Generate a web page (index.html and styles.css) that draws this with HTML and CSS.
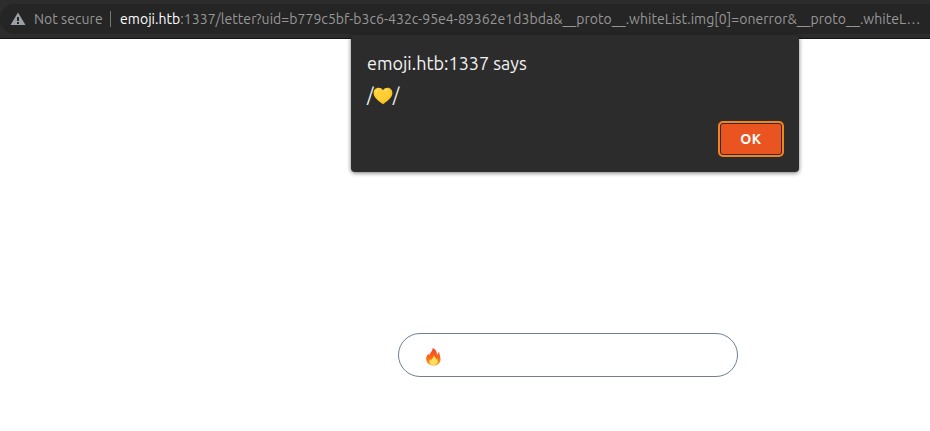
FILE: index.html
```html
<!DOCTYPE html>
<html lang="en">
<head>
<meta charset="utf-8">
<title>emoji.htb</title>
<link rel="stylesheet" href="styles.css">
</head>
<body>
<header class="toolbar">
  <div class="omnibox">
    <svg class="warning" viewBox="0 0 16 14" width="16" height="14"><path fill="#9aa0a6" fill-rule="evenodd" d="M8 .5 15.500 13H.5ZM7 5v4h2V5ZM7 10v2h2v-2Z"/></svg>
    <span class="status">Not secure</span>
    <span class="divider"></span>
    <span class="url"><span class="host">emoji.htb</span><span class="uid">:1337/letter?uid=b779c5bf-b3c6-432c-95e4-89362e1d3bda</span><span class="query">&amp;__proto__.whiteList.img[0]=onerror&amp;__proto__.whiteL…</span></span>
  </div>
</header>
<main class="page">
  <div class="field">
    <svg class="fire" viewBox="0 0 18 20" width="18" height="20">
      <defs><linearGradient id="flame" x2="0" y2="1"><stop stop-color="#f4422e"/><stop offset=".5" stop-color="#fb6418"/><stop offset="1" stop-color="#ff9d1c"/></linearGradient></defs>
      <path fill="url(#flame)" d="M7.600 1c.3 3-2.700 4.700-3.500 7.500L3.300 6.700C1.700 8.500 1 10.500 1.200 12.500 1.500 16.300 4.700 18.500 8.500 18.500c4.300 0 7-2.600 7-6.600 0-3-1.300-4.400-1.300-6.900-1 .5-1.500 1.500-1.700 3-.8-1-.5-2.300-1.300-3.800C10.500 2.500 9 1.500 7.600 1Z"/>
      <path fill="#ffe05c" d="M8.800 8.500c.2 2-2.100 3-2.600 4.700l-.9-1c-1 1.400-1.300 2.600-.7 3.700.7 1.500 2.100 2.200 4 2.200 2.500 0 4.200-1.400 4.200-3.600 0-1.200-.5-1.900-.6-3.100-.7.300-.9.800-1.100 1.500-.5-1.700-.7-3.200-2.300-4.400Z"/>
    </svg>
  </div>
</main>
<div class="dialog" role="dialog">
  <div class="title">emoji.htb:1337 says</div>
  <div class="message"><span>/</span><svg class="heart" viewBox="0 0 20 18" width="20" height="18" preserveAspectRatio="none"><defs><radialGradient id="gold" cx=".4" cy=".3" r=".75"><stop offset=".5" stop-color="#ffcf35"/><stop offset="1" stop-color="#f5b416"/></radialGradient></defs><path fill="url(#gold)" d="M10 3.200C8.800 1.500 7.400.8 5.600.8 2.700.8.6 3 .6 6c0 4.500 4.900 8 9.400 11.200C14.500 14 19.400 10.500 19.400 6c0-3-2.100-5.200-5-5.200-1.800 0-3.200.7-4.400 2.400Z"/><path d="M3 5.500q.5-2 2.200-2.400M12.400 4q1-1.300 2.400-1" fill="none" stroke="#ffe36c" stroke-width="1.200" stroke-linecap="round"/></svg><span>/</span></div>
  <div class="actions"><button class="ok">OK</button></div>
</div>
</body>
</html>
```
FILE: styles.css
```css
* { box-sizing: border-box; }
body {
  margin: 0;
  height: 431px;
  overflow: hidden;
  background: #fff;
  font-family: Ubuntu, "Noto Sans", sans-serif;
}
.toolbar {
  height: 39px;
  padding-top: 4px;
  background: #2c2c2c;
  border-bottom: 1px solid #141414;
}
.omnibox {
  display: flex;
  align-items: center;
  height: 30px;
  margin-right: -30px;
  padding-left: 10px;
  border-radius: 15px;
  background: #252525;
  color: #979797;
  font-size: 14px;
  line-height: 20px;
  white-space: nowrap;
}
.warning { margin-right: 8px; flex: none; }
.status { width: 76px; letter-spacing: .05px; }
.divider { width: 1px; height: 16px; margin-right: 9px; background: #777; }
.url { display: flex; letter-spacing: .045px; }
.host { color: #fff; }
.page { display: flex; padding: 294px 0 0 398px; }
.field {
  display: flex;
  width: 340px;
  height: 44px;
  padding: 13px 0 0 26px;
  border: 1px solid #708090;
  border-radius: 22px;
}
.dialog {
  position: absolute;
  top: 35px;
  left: 351px;
  width: 448px;
  height: 137px;
  padding: 15px 15px 15px 16px;
  border-radius: 4px;
  background: #2c2c2c;
  box-shadow: 0 1px 4px rgba(0, 0, 0, .55);
  color: #f2f2f2;
  font-size: 18px;
}
.title { height: 27px; line-height: 27px; }
.message { display: flex; align-items: center; height: 27px; margin-top: 5px; line-height: 27px; }
.heart { margin: 0 -.5px; }
.actions { display: flex; justify-content: flex-end; margin-top: 12px; }
.ok {
  width: 66px;
  height: 36px;
  padding: 0;
  border: 2px solid #f58220;
  border-radius: 5px;
  background: #e95420;
  box-shadow: inset 0 0 0 1px #2c2c2c;
  color: #fff;
  font: 700 14px/30px Ubuntu, "Noto Sans", sans-serif;
  letter-spacing: .5px;
}
```
